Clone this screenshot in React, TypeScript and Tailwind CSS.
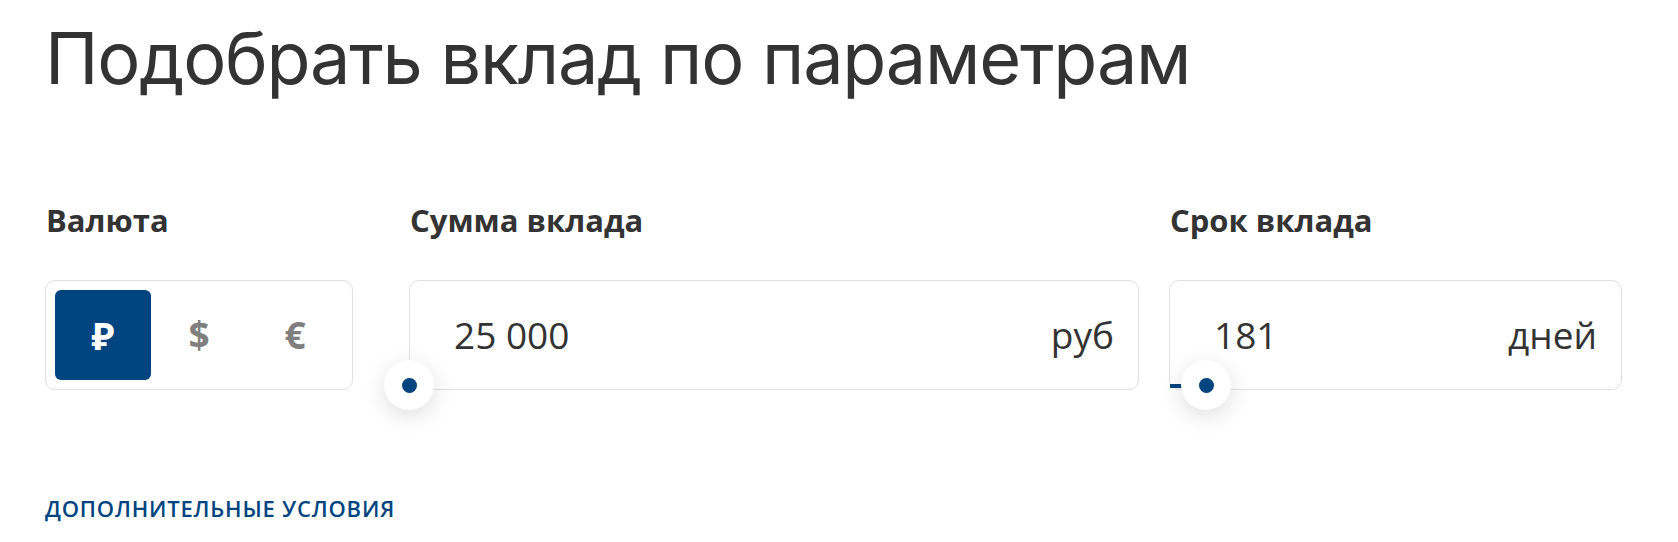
import React from "react";

const Thumb = ({ left }: { left: string }) => (
  <div
    className={`absolute top-[105px] ${left} -translate-x-1/2 -translate-y-1/2 w-[50px] h-[50px] rounded-full bg-white shadow-[0_6px_22px_rgba(0,0,0,0.13)] flex items-center justify-center`}
  >
    <div className="w-[15px] h-[15px] rounded-full bg-[#00457f]" />
  </div>
);

export default function App() {
  return (
    <div
      className="w-full h-[542px] bg-white text-[#333333] pl-[45px] overflow-hidden"
      style={{ fontFamily: '"Open Sans", "Noto Sans", sans-serif' }}
    >
      <h1
        className="pt-[22px] text-[72px] leading-none font-normal tracking-[-1.25px] whitespace-nowrap"
        style={{ fontFamily: 'Inter, "Open Sans", sans-serif' }}
      >
        Подобрать вклад по параметрам
      </h1>

      <div className="mt-[108px] flex">
        <div className="w-[308px] flex flex-col">
          <div className="text-[31px] leading-[1.2] font-bold pl-[1px]">Валюта</div>
          <div className="mt-[41px] h-[110px] border border-[#e0e0e0] rounded-[10px] p-[9px] flex">
            <div className="w-[96px] h-[90px] rounded-[6px] bg-[#00457f] text-white flex items-center justify-center text-[38px] font-bold" style={{ fontFamily: '"Noto Sans", "DejaVu Sans", sans-serif' }}>
              ₽
            </div>
            <div className="w-[96px] h-[90px] flex items-center justify-center text-[37px] font-bold text-[#7f7f7f]" style={{ fontFamily: '"Noto Sans", "DejaVu Sans", sans-serif' }}>
              $
            </div>
            <div className="w-[96px] h-[90px] flex items-center justify-center text-[37px] font-bold text-[#7f7f7f]" style={{ fontFamily: '"Noto Sans", "DejaVu Sans", sans-serif' }}>
              €
            </div>
          </div>
        </div>

        <div className="ml-[56px] w-[730px] flex flex-col">
          <div className="text-[31px] leading-[1.2] font-bold pl-[1px]">Сумма вклада</div>
          <div className="relative mt-[41px] h-[110px]">
            <div className="h-full border border-[#e0e0e0] rounded-[10px] pl-[44px] pr-[24px] flex items-center justify-between text-[37px]">
              <span>25 000</span>
              <span>руб</span>
            </div>
            <Thumb left="left-0" />
          </div>
        </div>

        <div className="ml-[30px] w-[453px] flex flex-col">
          <div className="text-[31px] leading-[1.2] font-bold pl-[1px]">Срок вклада</div>
          <div className="relative mt-[41px] h-[110px]">
            <div className="h-full border border-[#e0e0e0] rounded-[10px] pl-[44px] pr-[24px] flex items-center justify-between text-[37px]">
              <span>181</span>
              <span>дней</span>
            </div>
            <div className="absolute left-[1px] top-[104px] w-[36px] h-[4px] bg-[#00457f]" />
            <Thumb left="left-[37px]" />
          </div>
        </div>
      </div>

      <div className="mt-[105px] text-[22px] leading-[1.2] font-semibold tracking-[0.8px] text-[#00457f] uppercase">
        Дополнительные условия
      </div>
    </div>
  );
}
